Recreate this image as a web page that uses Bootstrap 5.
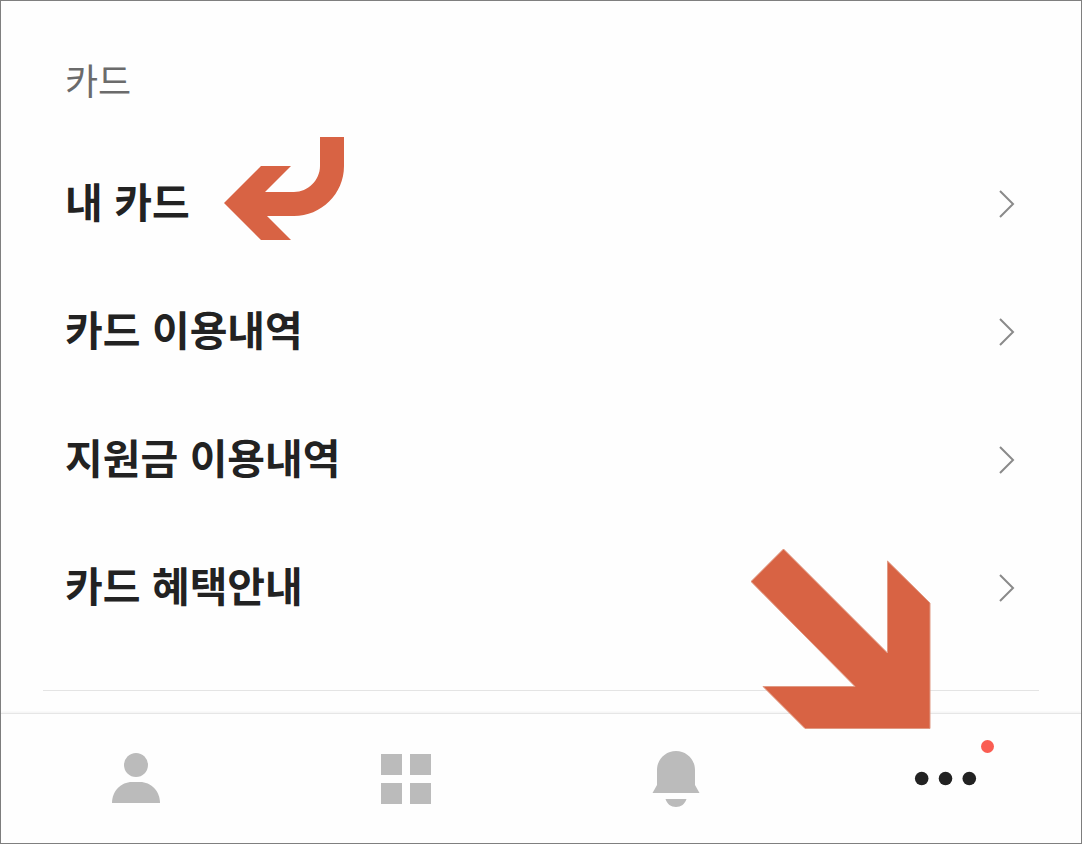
<!DOCTYPE html>
<html lang="ko">
<head>
<meta charset="utf-8">
<meta name="viewport" content="width=device-width, initial-scale=1">
<title>카드</title>
<link href="https://cdn.jsdelivr.net/npm/bootstrap@5.3.0/dist/css/bootstrap.min.css" rel="stylesheet">
<style>
  body { font-family: "Noto Sans CJK KR", sans-serif; background: #fefefe; color: #222; }
  .app-frame { border: 1px solid #7f7f7f; }
  .menu-section { padding: 54px 64px 0; }
  .menu-title { font-size: 36px; line-height: 48px; font-weight: 400; color: #6b6b6b; margin-bottom: 37px; }
  .menu-row { height: 128px; font-size: 41px; line-height: 56px; font-weight: 700; color: #222; }
  .menu-label { padding-bottom: 8px; }
  .chevron { width: 18px; height: 30px; fill: none; stroke: #8a8a8a; stroke-width: 2; }
  .section-rule { margin: 38px 42px 22px; border-top: 1px solid #e4e4e4; }
  .tab-bar { border-top: 1px solid #e6e6e6; box-shadow: 0 -1px 2px #0000000d; }
  .tab-link { height: 129px; color: #bbb; }
  .tab-link.active { color: #222; }
  .pointer-arrow { position: absolute; fill: #d86344; pointer-events: none; }
  .pointer-back { left: 100%; top: -35px; margin-left: 34px; }
  .pointer-down { right: 150px; top: -166px; stroke: #e09a84; stroke-width: 1; z-index: 2; }
  .new-dot { position: absolute; left: 100%; top: -11px; width: 13px; height: 13px; margin-left: 3px; background: #fa5d52; }
</style>
</head>
<body>
<div class="app-frame min-vh-100 d-flex flex-column">
  <main class="flex-grow-1">
    <section class="menu-section" aria-labelledby="card-title">
      <h2 class="menu-title mt-0" id="card-title">카드</h2>
      <ul class="list-unstyled mb-0">
        <li><a href="#my" class="menu-row d-flex align-items-center justify-content-between text-decoration-none">
          <span class="menu-label position-relative">내 카드
            <svg class="pointer-arrow pointer-back" width="120" height="103" viewBox="0 0 120 103" aria-hidden="true"><path d="M96 0H120V29C120 57 97 79 70 79H43L67 103H37L0 66L37 29H67L41 55H70C84 55 96 43 96 29Z"/></svg>
          </span>
          <svg class="chevron" viewBox="0 0 18 30" aria-hidden="true"><path d="M1 2L14 15L1 28"/></svg>
        </a></li>
        <li><a href="#usage" class="menu-row d-flex align-items-center justify-content-between text-decoration-none">
          <span class="menu-label">카드 이용내역</span>
          <svg class="chevron" viewBox="0 0 18 30" aria-hidden="true"><path d="M1 2L14 15L1 28"/></svg>
        </a></li>
        <li><a href="#support" class="menu-row d-flex align-items-center justify-content-between text-decoration-none">
          <span class="menu-label">지원금 이용내역</span>
          <svg class="chevron" viewBox="0 0 18 30" aria-hidden="true"><path d="M1 2L14 15L1 28"/></svg>
        </a></li>
        <li><a href="#benefit" class="menu-row d-flex align-items-center justify-content-between text-decoration-none">
          <span class="menu-label">카드 혜택안내</span>
          <svg class="chevron" viewBox="0 0 18 30" aria-hidden="true"><path d="M1 2L14 15L1 28"/></svg>
        </a></li>
      </ul>
    </section>
    <div class="section-rule"></div>
  </main>
  <nav class="tab-bar nav nav-fill flex-nowrap">
    <div class="nav-item col-3"><a href="#me" class="tab-link d-flex align-items-center justify-content-center" aria-label="프로필">
      <svg width="56" height="56" viewBox="0 0 56 56" fill="currentColor"><circle cx="28" cy="14" r="12"/><path d="M4 52C4 40 13 31 24 31H32C43 31 52 40 52 52Z"/></svg>
    </a></div>
    <div class="nav-item col-3"><a href="#all" class="tab-link d-flex align-items-center justify-content-center" aria-label="전체">
      <svg width="56" height="56" viewBox="0 0 56 56" fill="currentColor"><path d="M3 3h21v21H3zM32 3h21v21H32zM3 32h21v21H3zM32 32h21v21H32z"/></svg>
    </a></div>
    <div class="nav-item col-3"><a href="#alerts" class="tab-link d-flex align-items-center justify-content-center" aria-label="알림">
      <svg width="56" height="56" viewBox="0 0 56 56" fill="currentColor"><path d="M28 0C38.500 0 47 8.500 47 19V34L51.500 42H4.500L9 34V19C9 8.500 17.500 0 28 0ZM17.500 48H38.500C37 53 33 56 28 56S19 53 17.500 48Z"/></svg>
    </a></div>
    <div class="nav-item col-3 position-relative"><a href="#more" class="tab-link active d-flex align-items-center justify-content-center" aria-label="더보기" aria-current="page">
      <span class="position-relative d-flex">
        <svg width="64" height="56" viewBox="0 0 64 56" fill="currentColor"><circle cx="7.700" cy="27.500" r="6.800"/><circle cx="31.500" cy="27.500" r="6.800"/><circle cx="55.300" cy="27.500" r="6.800"/></svg>
        <span class="new-dot rounded-circle"></span>
      </span></a>
      <svg class="pointer-arrow pointer-down" width="180" height="182" viewBox="0 0 180 182" aria-hidden="true"><path d="M32.500 1L136.500 105V13L179 55V180.500H54L12 138.500H104L0 33.500Z"/></svg>
    </div>
  </nav>
</div>
<script src="https://cdn.jsdelivr.net/npm/bootstrap@5.3.0/dist/js/bootstrap.bundle.min.js"></script>
</body>
</html>
